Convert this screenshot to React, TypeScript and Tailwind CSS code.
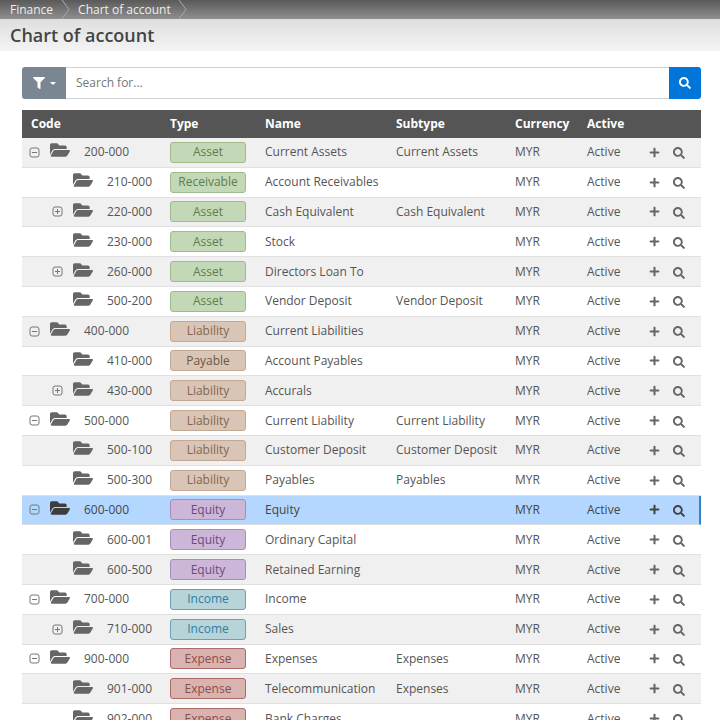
import { FaFilter, FaFolderOpen, FaPlus, FaSearch } from 'react-icons/fa';

type Kind = 'Asset' | 'Receivable' | 'Liability' | 'Payable' | 'Equity' | 'Income' | 'Expense';

const pillClass: Record<Kind, string> = {
  Asset: 'bg-[#c3d8b6] border-[#9dbb8c] text-[#5f7d4e]',
  Receivable: 'bg-[#c3d8b6] border-[#9dbb8c] text-[#5f7d4e]',
  Liability: 'bg-[#d9c5b6] border-[#c4a893] text-[#856650]',
  Payable: 'bg-[#d9c5b6] border-[#c4a893] text-[#6f5544]',
  Equity: 'bg-[#ccb7d8] border-[#ab8bbd] text-[#6b4a80]',
  Income: 'bg-[#b7d4d9] border-[#6d9fb3] text-[#2f7ea3]',
  Expense: 'bg-[#d9b3b0] border-[#ab6a66] text-[#8f4d47]',
};

type Row = {
  code: string;
  kind: Kind;
  name: string;
  subtype?: string;
  level: 0 | 1;
  toggle?: 'open' | 'closed';
  selected?: boolean;
};

const rows: Row[] = [
  { code: '200-000', kind: 'Asset', name: 'Current Assets', subtype: 'Current Assets', level: 0, toggle: 'open' },
  { code: '210-000', kind: 'Receivable', name: 'Account Receivables', level: 1 },
  { code: '220-000', kind: 'Asset', name: 'Cash Equivalent', subtype: 'Cash Equivalent', level: 1, toggle: 'closed' },
  { code: '230-000', kind: 'Asset', name: 'Stock', level: 1 },
  { code: '260-000', kind: 'Asset', name: 'Directors Loan To', level: 1, toggle: 'closed' },
  { code: '500-200', kind: 'Asset', name: 'Vendor Deposit', subtype: 'Vendor Deposit', level: 1 },
  { code: '400-000', kind: 'Liability', name: 'Current Liabilities', level: 0, toggle: 'open' },
  { code: '410-000', kind: 'Payable', name: 'Account Payables', level: 1 },
  { code: '430-000', kind: 'Liability', name: 'Accurals', level: 1, toggle: 'closed' },
  { code: '500-000', kind: 'Liability', name: 'Current Liability', subtype: 'Current Liability', level: 0, toggle: 'open' },
  { code: '500-100', kind: 'Liability', name: 'Customer Deposit', subtype: 'Customer Deposit', level: 1 },
  { code: '500-300', kind: 'Liability', name: 'Payables', subtype: 'Payables', level: 1 },
  { code: '600-000', kind: 'Equity', name: 'Equity', level: 0, toggle: 'open', selected: true },
  { code: '600-001', kind: 'Equity', name: 'Ordinary Capital', level: 1 },
  { code: '600-500', kind: 'Equity', name: 'Retained Earning', level: 1 },
  { code: '700-000', kind: 'Income', name: 'Income', level: 0, toggle: 'open' },
  { code: '710-000', kind: 'Income', name: 'Sales', level: 1, toggle: 'closed' },
  { code: '900-000', kind: 'Expense', name: 'Expenses', subtype: 'Expenses', level: 0, toggle: 'open' },
  { code: '901-000', kind: 'Expense', name: 'Telecommunication', subtype: 'Expenses', level: 1 },
  { code: '902-000', kind: 'Expense', name: 'Bank Charges', level: 1 },
];

function TreeToggle({ open }: { open: boolean }) {
  return (
    <svg width="11" height="11" viewBox="0 0 11 11" fill="none" stroke="#777" strokeWidth="1">
      <rect x="1" y="1" width="9" height="9" rx="2" />
      <path d="M3 5.5h5" />
      {!open && <path d="M5.5 3v5" />}
    </svg>
  );
}

function TreeRow({ row, striped }: { row: Row; striped: boolean }) {
  const bg = row.selected ? 'bg-[#b3d7ff] border-r-2 border-r-[#3b82c4]' : striped ? 'bg-[#f0f0f0]' : 'bg-white';
  const text = row.selected ? 'text-[#444]' : 'text-[#555]';
  return (
    <div className={`flex items-center h-[29.8px] shrink-0 border-b border-[#e0e0e0] ${bg} ${text}`}>
      <div className={`flex items-center w-[148px] shrink-0 ${row.level === 0 ? 'pl-[7px]' : 'pl-[30px]'}`}>
        <span className="w-[11px] h-[11px] shrink-0 flex">
          {row.toggle && <TreeToggle open={row.toggle === 'open'} />}
        </span>
        <FaFolderOpen className={`ml-[10px] -mt-[4px] shrink-0 text-[20px] ${row.selected ? 'text-[#3d3d3d]' : 'text-[#666]'}`} />
        <span className="ml-[14px] text-[12px]">{row.code}</span>
      </div>
      <div className="w-[95px] shrink-0">
        <div className={`w-[76px] h-[21px] rounded-[3px] border flex items-center justify-center text-[12px] ${pillClass[row.kind]}`}>
          {row.kind}
        </div>
      </div>
      <div className="w-[131px] shrink-0 text-[12px] whitespace-nowrap">{row.name}</div>
      <div className="w-[119px] shrink-0 text-[12px] whitespace-nowrap">{row.subtype}</div>
      <div className="w-[72px] shrink-0 text-[12px]">MYR</div>
      <div className="w-[62px] shrink-0 text-[12px]">Active</div>
      <FaPlus className={`text-[11px] shrink-0 ${row.selected ? 'text-[#444]' : 'text-[#666]'}`} />
      <FaSearch className={`ml-[13px] mt-[2px] text-[12px] shrink-0 ${row.selected ? 'text-[#444]' : 'text-[#666]'}`} />
    </div>
  );
}

export default function App() {
  return (
    <div className="w-[720px] h-[720px] overflow-hidden bg-white font-['Open_Sans',sans-serif]">
      {/* Breadcrumb */}
      <div className="h-[19px] flex items-center bg-gradient-to-b from-[#5a5a5a] to-[#8f8f8f] text-[12px] text-[#eee]">
        <span className="pl-[10px] pr-[10px]">Finance</span>
        <svg width="10" height="19" viewBox="0 0 10 19" fill="none" stroke="#aaa" className="-ml-[2px]">
          <path d="M1 0l7 9.5L1 19" />
        </svg>
        <span className="pl-[7px] pr-[7px]">Chart of account</span>
        <svg width="10" height="19" viewBox="0 0 10 19" fill="none" stroke="#aaa">
          <path d="M1 0l7 9.5L1 19" />
        </svg>
      </div>
      {/* Title */}
      <div className="h-[32px] flex items-center px-[10px] bg-gradient-to-b from-[#dedede] to-[#f4f4f4]">
        <h1 className="text-[18px] font-semibold text-[#444]">Chart of account</h1>
      </div>
      <div className="pl-[22px] pr-[19px] pt-[16px]">
        {/* Search */}
        <div className="flex h-[32px] rounded-[3px] overflow-hidden">
          <div className="w-[44px] bg-[#7a8793] flex items-center justify-center gap-[5px] text-white">
            <FaFilter className="text-[12px]" />
            <span className="w-0 h-0 border-x-[3px] border-x-transparent border-t-[3px] border-t-white" />
          </div>
          <div className="flex-1 flex items-center pl-[10px] border-y border-[#ccd3da] text-[12px] text-[#777]">Search for...</div>
          <div className="w-[32px] bg-[#0275d8] flex items-center justify-center text-white">
            <FaSearch className="text-[12px]" />
          </div>
        </div>
        {/* Table */}
        <div className="mt-[11px] w-[679px]">
          <div className="flex items-center h-[28px] bg-[#555] text-white text-[12px] font-bold">
            <div className="w-[148px] pl-[9px] shrink-0">Code</div>
            <div className="w-[95px] shrink-0">Type</div>
            <div className="w-[131px] shrink-0">Name</div>
            <div className="w-[119px] shrink-0">Subtype</div>
            <div className="w-[72px] shrink-0">Currency</div>
            <div className="w-[62px] shrink-0">Active</div>
          </div>
          <div className="flex flex-col">
            {rows.map((row, i) => (
              <TreeRow key={row.code} row={row} striped={i % 2 === 0} />
            ))}
          </div>
        </div>
      </div>
    </div>
  );
}
